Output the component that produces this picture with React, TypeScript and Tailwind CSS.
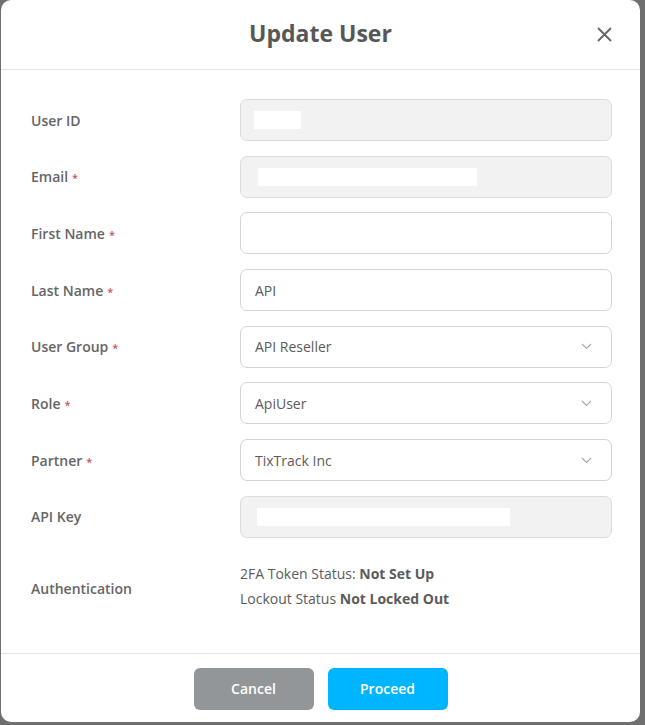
import React from 'react';

type Field = {
  label: string;
  required?: boolean;
  kind: 'readonly' | 'text' | 'select';
  value?: string;
  maskWidth?: number;
  maskOffset?: number;
};

const fields: Field[] = [
  { label: 'User ID', kind: 'readonly', maskWidth: 47, maskOffset: 13 },
  { label: 'Email', required: true, kind: 'readonly', maskWidth: 219, maskOffset: 17 },
  { label: 'First Name', required: true, kind: 'text', value: '' },
  { label: 'Last Name', required: true, kind: 'text', value: 'API' },
  { label: 'User Group', required: true, kind: 'select', value: 'API Reseller' },
  { label: 'Role', required: true, kind: 'select', value: 'ApiUser' },
  { label: 'Partner', required: true, kind: 'select', value: 'TixTrack Inc' },
  { label: 'API Key', kind: 'readonly', maskWidth: 253, maskOffset: 16 },
];

const Chevron = () => (
  <svg width="11" height="7" viewBox="0 0 11 7" fill="none" className="shrink-0">
    <polyline points="1,1 5.5,5.5 10,1" stroke="#a8a8a8" strokeWidth="1.1" />
  </svg>
);

const FieldControl: React.FC<{ field: Field }> = ({ field }) => {
  if (field.kind === 'readonly') {
    return (
      <div className="h-[42px] rounded-[7px] border border-[#dcdcdc] bg-[#f2f2f2] flex items-center">
        {/* masked value */}
        <div
          className="h-[18px] bg-white"
          style={{ width: field.maskWidth, marginLeft: field.maskOffset }}
        />
      </div>
    );
  }
  if (field.kind === 'select') {
    return (
      <div className="h-[42px] rounded-[7px] border border-[#d4d4d4] bg-white flex items-center justify-between pl-[14px] pr-[19px] text-[14px] text-[#5b5b5b]">
        <span>{field.value}</span>
        <Chevron />
      </div>
    );
  }
  return (
    <div className="h-[42px] rounded-[7px] border border-[#d4d4d4] bg-white flex items-center pl-[14px] text-[14px] text-[#5b5b5b]">
      {field.value}
    </div>
  );
};

export default function App() {
  return (
    <div
      className="min-h-[725px] w-full bg-[#6f6f6f] pl-[1px] pr-[5px] pb-[3px]"
      style={{ fontFamily: '"Open Sans", "Liberation Sans", sans-serif' }}
    >
      <div className="w-[639px] h-[722px] bg-white rounded-[10px] flex flex-col">
        {/* header */}
        <div className="relative h-[70px] border-b border-[#e3e3e3] flex items-center justify-center shrink-0">
          <h1 className="text-[23px] font-bold text-[#575757] -mt-[2px]">Update User</h1>
          <button className="absolute right-[28px] top-[26px] w-[16px] h-[16px] flex items-center justify-center">
            <svg width="15" height="15" viewBox="0 0 15 15" fill="none">
              <path d="M1 1L14 14M14 1L1 14" stroke="#666" strokeWidth="1.8" />
            </svg>
          </button>
        </div>

        {/* body */}
        <div className="flex-1 pt-[29px] pl-[30px] pr-[28px]">
          <div className="flex flex-col gap-[14.7px]">
            {fields.map((f) => (
              <div key={f.label} className="grid grid-cols-[209px_1fr] items-center">
                <div className="text-[14px] font-semibold text-[#656565]">
                  {f.label}
                  {f.required && <span className="text-[#c9545c] ml-[4px] text-[11px]">*</span>}
                </div>
                <FieldControl field={f} />
              </div>
            ))}
            <div className="grid grid-cols-[209px_1fr] items-center mt-[8px]">
              <div className="text-[14px] font-semibold text-[#656565] pt-[6px]">Authentication</div>
              <div className="text-[14px] text-[#5b5b5b] leading-[25px]">
                <div>
                  2FA Token Status: <span className="font-bold">Not Set Up</span>
                </div>
                <div>
                  Lockout Status <span className="font-bold">Not Locked Out</span>
                </div>
              </div>
            </div>
          </div>
        </div>

        {/* footer */}
        <div className="h-[69px] border-t border-[#e3e3e3] flex items-start justify-center gap-[14px] pt-[14px] shrink-0">
          <button className="w-[120px] h-[42px] rounded-[6px] bg-[#939699] text-white text-[14px] font-semibold pb-[1px]">
            Cancel
          </button>
          <button className="w-[120px] h-[42px] rounded-[6px] bg-[#00b5ff] text-white text-[14px] font-semibold pb-[1px]">
            Proceed
          </button>
        </div>
      </div>
    </div>
  );
}
